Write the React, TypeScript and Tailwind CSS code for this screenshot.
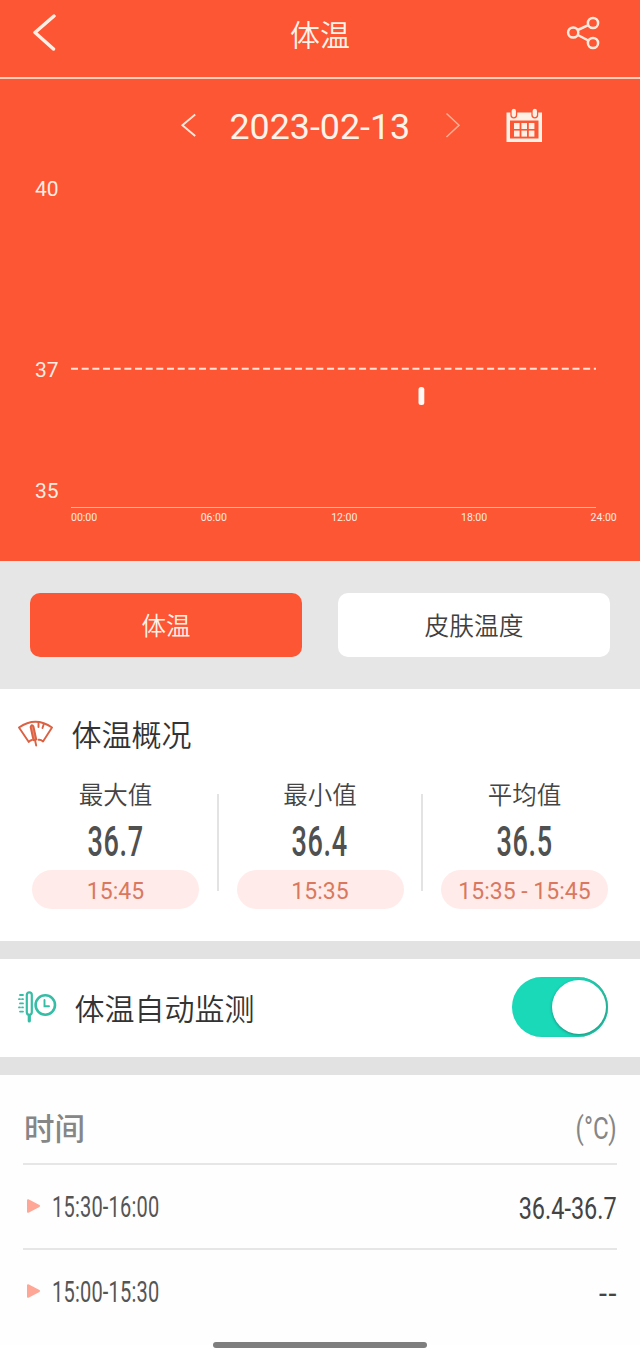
import React from "react";

const cjk = "font-['Roboto','Noto_Sans_CJK_SC',sans-serif]";

function Header() {
  return (
    <header className="flex h-[79px] items-center border-b-2 border-[#ffcdb9] pt-[2px]">
      <svg className="mt-[-17px] ml-[31px] h-[40px] w-[28px]" viewBox="0 0 28 40" fill="none" stroke="#fff0e6" strokeWidth="3.4" strokeLinecap="round" strokeLinejoin="round">
        <path d="M23 5L4 21.5L22.5 38" />
      </svg>
      <h1 className="mt-[-8px] ml-[231px] text-[30px] leading-[44px] font-[350] text-[#fff3ea]">体温</h1>
      <svg className="mt-[-16px] mr-[38px] ml-auto h-[36px] w-[36px]" viewBox="0 0 36 36" fill="none" stroke="#ffe9dc" strokeWidth="2.5">
        <circle cx="7.2" cy="18.5" r="5.1" />
        <circle cx="27" cy="9" r="5.1" />
        <circle cx="27" cy="29" r="5.1" />
        <path d="M11.8 16L22.3 11.2M11.8 21L22.3 26.5" />
      </svg>
    </header>
  );
}

function DateBar() {
  return (
    <div className="flex h-[93px] items-center">
      <svg className="mt-[-2px] ml-[178px] h-[26px] w-[20px]" viewBox="0 0 20 26" fill="none" stroke="#ffe6d9" strokeWidth="1.9">
        <path d="M17.2 2.6L4.4 13.2L17.2 24" />
      </svg>
      <span className="mt-[2px] ml-[31.5px] w-[181.5px] text-[35.8px] leading-[44px] whitespace-nowrap text-[#fff3ea]">2023-02-13</span>
      <svg className="mt-[-2px] ml-[33px] h-[26px] w-[20px]" viewBox="0 0 20 26" fill="none" stroke="#ffad91" strokeWidth="1.5">
        <path d="M2.5 1.5L15 13.2L2.5 25" />
      </svg>
      <svg className="mt-[-2px] ml-[41px] h-[36px] w-[38px]" viewBox="0 0 38 36">
        <path d="M1.5 5.5H37V35H1.5Z" fill="#fff0e6" />
        <path d="M5 13.5H33.5V31.5H5Z" fill="#fd5634" />
        <g fill="#fff0e6" stroke="#fd5634" strokeWidth="1.3">
          <rect x="6" y="1.2" width="5.6" height="9.6" rx="2.8" />
          <rect x="27" y="1.2" width="5.6" height="9.6" rx="2.8" />
        </g>
        <g fill="#fff0e6">
          <rect x="9" y="16" width="5.6" height="6" />
          <rect x="16.4" y="16" width="5.6" height="6" />
          <rect x="23.8" y="16" width="5.6" height="6" />
          <rect x="9" y="23.6" width="5.6" height="6" />
          <rect x="16.4" y="23.6" width="5.6" height="6" />
          <rect x="23.8" y="23.6" width="5.6" height="6" />
        </g>
      </svg>
    </div>
  );
}

function Chart() {
  return (
    <svg className="block h-[389px] w-[640px]" viewBox="0 172 640 389" fill="#ffece2">
      <g fontSize="21">
        <text x="35" y="196">40</text>
        <text x="35" y="377">37</text>
        <text x="35" y="498">35</text>
      </g>
      <path d="M71 368.8H596" stroke="#ffe0d2" strokeWidth="2" strokeDasharray="7 3.67" />
      <rect x="418.5" y="387" width="5.8" height="18" rx="2.5" fill="#fff8f4" />
      <path d="M71 507.5H596" stroke="#ffb59c" strokeWidth="1.2" />
      <g fontSize="10.5">
        <text x="71" y="520.5">00:00</text>
        <text x="200.7" y="520.5">06:00</text>
        <text x="331.2" y="520.5">12:00</text>
        <text x="461" y="520.5">18:00</text>
        <text x="590.6" y="520.5">24:00</text>
      </g>
    </svg>
  );
}

function Tabs() {
  return (
    <div className="flex h-[128px] gap-[36px] bg-[#e6e6e6] px-[30px] pt-[32px]">
      <button className="h-[64px] w-[272px] rounded-[10px] bg-[#fd5634] pt-[4px] text-[24.5px] leading-[36px] font-[350] text-[#fff3ea]">体温</button>
      <button className="h-[64px] w-[272px] rounded-[10px] bg-white pt-[4px] text-[24.7px] leading-[36px] font-[350] text-[#404040]">皮肤温度</button>
    </div>
  );
}

function Stat({ label, value, time }: { label: string; value: string; time: string }) {
  return (
    <div className="flex w-[167px] flex-col items-center">
      <span className="pt-[1px] text-[24.5px] leading-[36px] font-[350] text-[#444]">{label}</span>
      <span className="mt-[1px] h-[51px] scale-x-[0.63] text-[43px] leading-[52px] font-medium tracking-[1px] text-[#505050]">{value}</span>
      <span className="mt-[4px] h-[39px] w-full rounded-full bg-[#ffecea] text-center text-[23px] leading-[43px] whitespace-nowrap text-[#da785f]">{time}</span>
    </div>
  );
}

function Summary() {
  return (
    <section className="h-[252px] bg-white">
      <div className="flex h-[88px] items-center">
        <svg className="ml-[17px] h-[32px] w-[38px]" viewBox="0 0 38 32" fill="none" stroke="#dc6142" strokeWidth="1.9" strokeLinecap="round" strokeLinejoin="round">
          <path d="M15 23Q13 23.3 11.8 25L2 10.5Q18.5-1 35 10.5L26 24.5Q23.8 22.4 21.5 22.8" />
          <path d="M13.6 10Q14.7 6.8 16.4 9.3L19.3 22.5L16.5 23.2Z" fill="#ea8a70" />
          <path d="M18 23L19.2 28.5M21.5 5.5V10M26.8 7L25.5 11" />
        </svg>
        <h2 className="ml-[16.5px] pt-[5px] text-[30px] leading-[44px] font-[350] text-[#333]">体温概况</h2>
      </div>
      <div className="flex justify-between px-[32px]">
        <Stat label="最大值" value="36.7" time="15:45" />
        <div className="mt-[17px] h-[97px] w-[2px] bg-[#e3e3e3]" />
        <Stat label="最小值" value="36.4" time="15:35" />
        <div className="mt-[17px] h-[97px] w-[2px] bg-[#e3e3e3]" />
        <Stat label="平均值" value="36.5" time="15:35 - 15:45" />
      </div>
    </section>
  );
}

function Monitor() {
  return (
    <section className="flex h-[134px] items-center border-t-[18px] border-b-[18px] border-[#e2e2e2] bg-white">
      <svg className="mt-[-3px] ml-[17px] h-[34px] w-[40px]" viewBox="0 0 40 34" fill="none" stroke="#35bda5" strokeWidth="2.2" strokeLinecap="round">
        <path d="M3 5H6M2 9.2H3M5 9.2H6M3 13.4H6M2 17.4H3M5 17.4H6M3 21.6H6" strokeWidth="1.8" />
        <rect x="9.8" y="2.4" width="5" height="22.4" rx="2.5" />
        <path d="M12.3 26V31" strokeWidth="3.2" />
        <circle cx="28.3" cy="15" r="9.7" strokeWidth="2.6" />
        <path d="M27.5 10V16.3H32" strokeWidth="1.9" />
      </svg>
      <h2 className="ml-[17.5px] pt-[4px] text-[30px] leading-[44px] font-[350] text-[#333]">体温自动监测</h2>
      <div className="mt-[-2px] mr-[32px] ml-auto flex h-[60px] w-[96px] items-center justify-end rounded-full bg-[#19d9b9] pr-[2px] shadow-[inset_-2px_0_2px_#31b99f]">
        <div className="h-[54px] w-[54px] rounded-full bg-white shadow-[0_1px_3px_#168d78]" />
      </div>
    </section>
  );
}

function Row({ time, value }: { time: string; value: string }) {
  const empty = value === "--";
  return (
    <div className="flex h-[85px] items-center border-t-2 border-[#e6e6e6]">
      <svg className="mt-[-1px] ml-[3px] h-[16px] w-[15px]" viewBox="0 0 15 16" fill="#ffa797" stroke="#ffa797" strokeWidth="2" strokeLinejoin="round">
        <path d="M2 2.2L13 8L2 13.8Z" />
      </svg>
      <span className="ml-[11px] origin-left scale-x-[0.69] pt-[3px] text-[29px] tracking-[0.3px] text-[#555]">{time}</span>
      <span className={`ml-auto origin-right pt-[3px] text-[32px] text-[#444] ${empty ? "mr-[-1px] scale-x-[0.9] tracking-[1.5px]" : "scale-x-[0.733]"}`}>{value}</span>
    </div>
  );
}

function Records() {
  return (
    <section className="h-[270px] bg-[#fefefe] px-[23px]">
      <div className="flex h-[88px] items-center justify-between pt-[20px] text-[#868686]">
        <span className="ml-[1px] pt-[1px] text-[30.5px] leading-[44px] font-medium">时间</span>
        <span className="origin-right scale-x-[0.78] text-[31px]">(°C)</span>
      </div>
      <Row time="15:30-16:00" value="36.4-36.7" />
      <Row time="15:00-15:30" value="--" />
      <div className="mx-auto mt-[9px] h-[6px] w-[214px] rounded-full bg-[#7e7e7e]" />
    </section>
  );
}

export default function App() {
  return (
    <main className={`h-[1361px] w-[640px] overflow-hidden bg-white ${cjk}`} lang="zh-CN">
      <div className="bg-[#fd5634]">
        <Header />
        <DateBar />
        <Chart />
      </div>
      <Tabs />
      <Summary />
      <Monitor />
      <Records />
    </main>
  );
}
